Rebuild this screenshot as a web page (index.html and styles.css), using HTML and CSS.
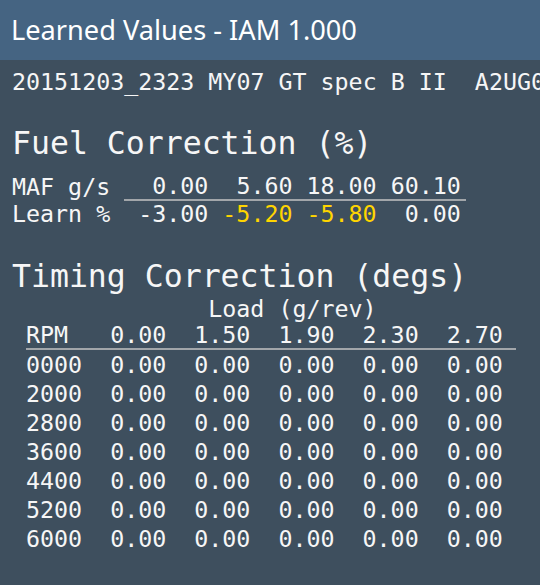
FILE: index.html
```html
<!DOCTYPE html>
<html>
<head>
<meta charset="utf-8">
<link rel="stylesheet" href="styles.css">
</head>
<body>
<header class="titlebar">Learned Values - IAM 1.000</header>
<main class="content">
  <div class="romid">20151203_2323 MY07 GT spec B II  A2UG000G</div>

  <h2 class="section-title fuel-title">Fuel Correction (%)</h2>
  <table class="fuel">
    <tr class="fuel-head">
      <td class="label">MAF g/s</td>
      <td class="val">0.00</td>
      <td class="val">5.60</td>
      <td class="val">18.00</td>
      <td class="val last">60.10</td>
    </tr>
    <tr class="fuel-row">
      <td class="label">Learn %</td>
      <td class="val">-3.00</td>
      <td class="val warn">-5.20</td>
      <td class="val warn">-5.80</td>
      <td class="val last">0.00</td>
    </tr>
  </table>

  <h2 class="section-title timing-title">Timing Correction (degs)</h2>
  <table class="timing">
    <tr class="load-row">
      <td class="rpm"></td>
      <td class="load" colspan="5">Load (g/rev)</td>
    </tr>
    <tr class="timing-head">
      <td class="rpm">RPM</td>
      <td class="val">0.00</td>
      <td class="val">1.50</td>
      <td class="val">1.90</td>
      <td class="val">2.30</td>
      <td class="val last">2.70</td>
    </tr>
    <tr class="timing-row"><td class="rpm">0000</td><td class="val">0.00</td><td class="val">0.00</td><td class="val">0.00</td><td class="val">0.00</td><td class="val last">0.00</td></tr>
    <tr class="timing-row"><td class="rpm">2000</td><td class="val">0.00</td><td class="val">0.00</td><td class="val">0.00</td><td class="val">0.00</td><td class="val last">0.00</td></tr>
    <tr class="timing-row"><td class="rpm">2800</td><td class="val">0.00</td><td class="val">0.00</td><td class="val">0.00</td><td class="val">0.00</td><td class="val last">0.00</td></tr>
    <tr class="timing-row"><td class="rpm">3600</td><td class="val">0.00</td><td class="val">0.00</td><td class="val">0.00</td><td class="val">0.00</td><td class="val last">0.00</td></tr>
    <tr class="timing-row"><td class="rpm">4400</td><td class="val">0.00</td><td class="val">0.00</td><td class="val">0.00</td><td class="val">0.00</td><td class="val last">0.00</td></tr>
    <tr class="timing-row"><td class="rpm">5200</td><td class="val">0.00</td><td class="val">0.00</td><td class="val">0.00</td><td class="val">0.00</td><td class="val last">0.00</td></tr>
    <tr class="timing-row"><td class="rpm">6000</td><td class="val">0.00</td><td class="val">0.00</td><td class="val">0.00</td><td class="val">0.00</td><td class="val last">0.00</td></tr>
  </table>
</main>
</body>
</html>
```
FILE: styles.css
```css
html, body {
  margin: 0;
  padding: 0;
  background: #3e4f5e;
  height: 100%;
  overflow: hidden;
}
body {
  color: #f6f6f6;
  font-family: "DejaVu Sans Mono", "Liberation Mono", monospace;
}
.titlebar {
  height: 60px;
  line-height: 60px;
  background: #456482;
  font-family: "Noto Sans", "Roboto", sans-serif;
  font-size: 27.2px;
  padding-left: 11px;
  color: #ffffff;
  white-space: nowrap;
}
.content {
  padding: 8px 0 0 12px;
  font-size: 23.3px;
}
.romid {
  white-space: pre;
  line-height: 28px;
}
.section-title {
  font-weight: normal;
  font-size: 31.5px;
  line-height: 40px;
  margin: 0;
  white-space: nowrap;
}
.fuel-title {
  margin-top: 27px;
}
.timing-title {
  margin-top: 29px;
}
table {
  border-collapse: collapse;
  border-spacing: 0;
}
td {
  padding: 0;
  white-space: pre;
}
.fuel {
  margin-top: 10px;
  line-height: 26px;
}
.fuel .label {
  width: 8ch;
  text-align: left;
}
.val {
  width: 6ch;
  text-align: right;
}
.val.last {
  padding-right: 5px;
}
.fuel-head .val {
  border-bottom: 2px solid #a2a6aa;
}
.warn {
  color: #ffd500;
}
.timing {
  margin-left: 14px;
  line-height: 26px;
}
.timing .rpm {
  width: 4ch;
  text-align: left;
}
.timing .val.last {
  padding-right: 13px;
}
.load {
  text-align: center;
  padding-right: 13px;
}
.timing-head td {
  border-bottom: 2px solid #a2a6aa;
}
.timing-row td {
  line-height: 29px;
}
```
